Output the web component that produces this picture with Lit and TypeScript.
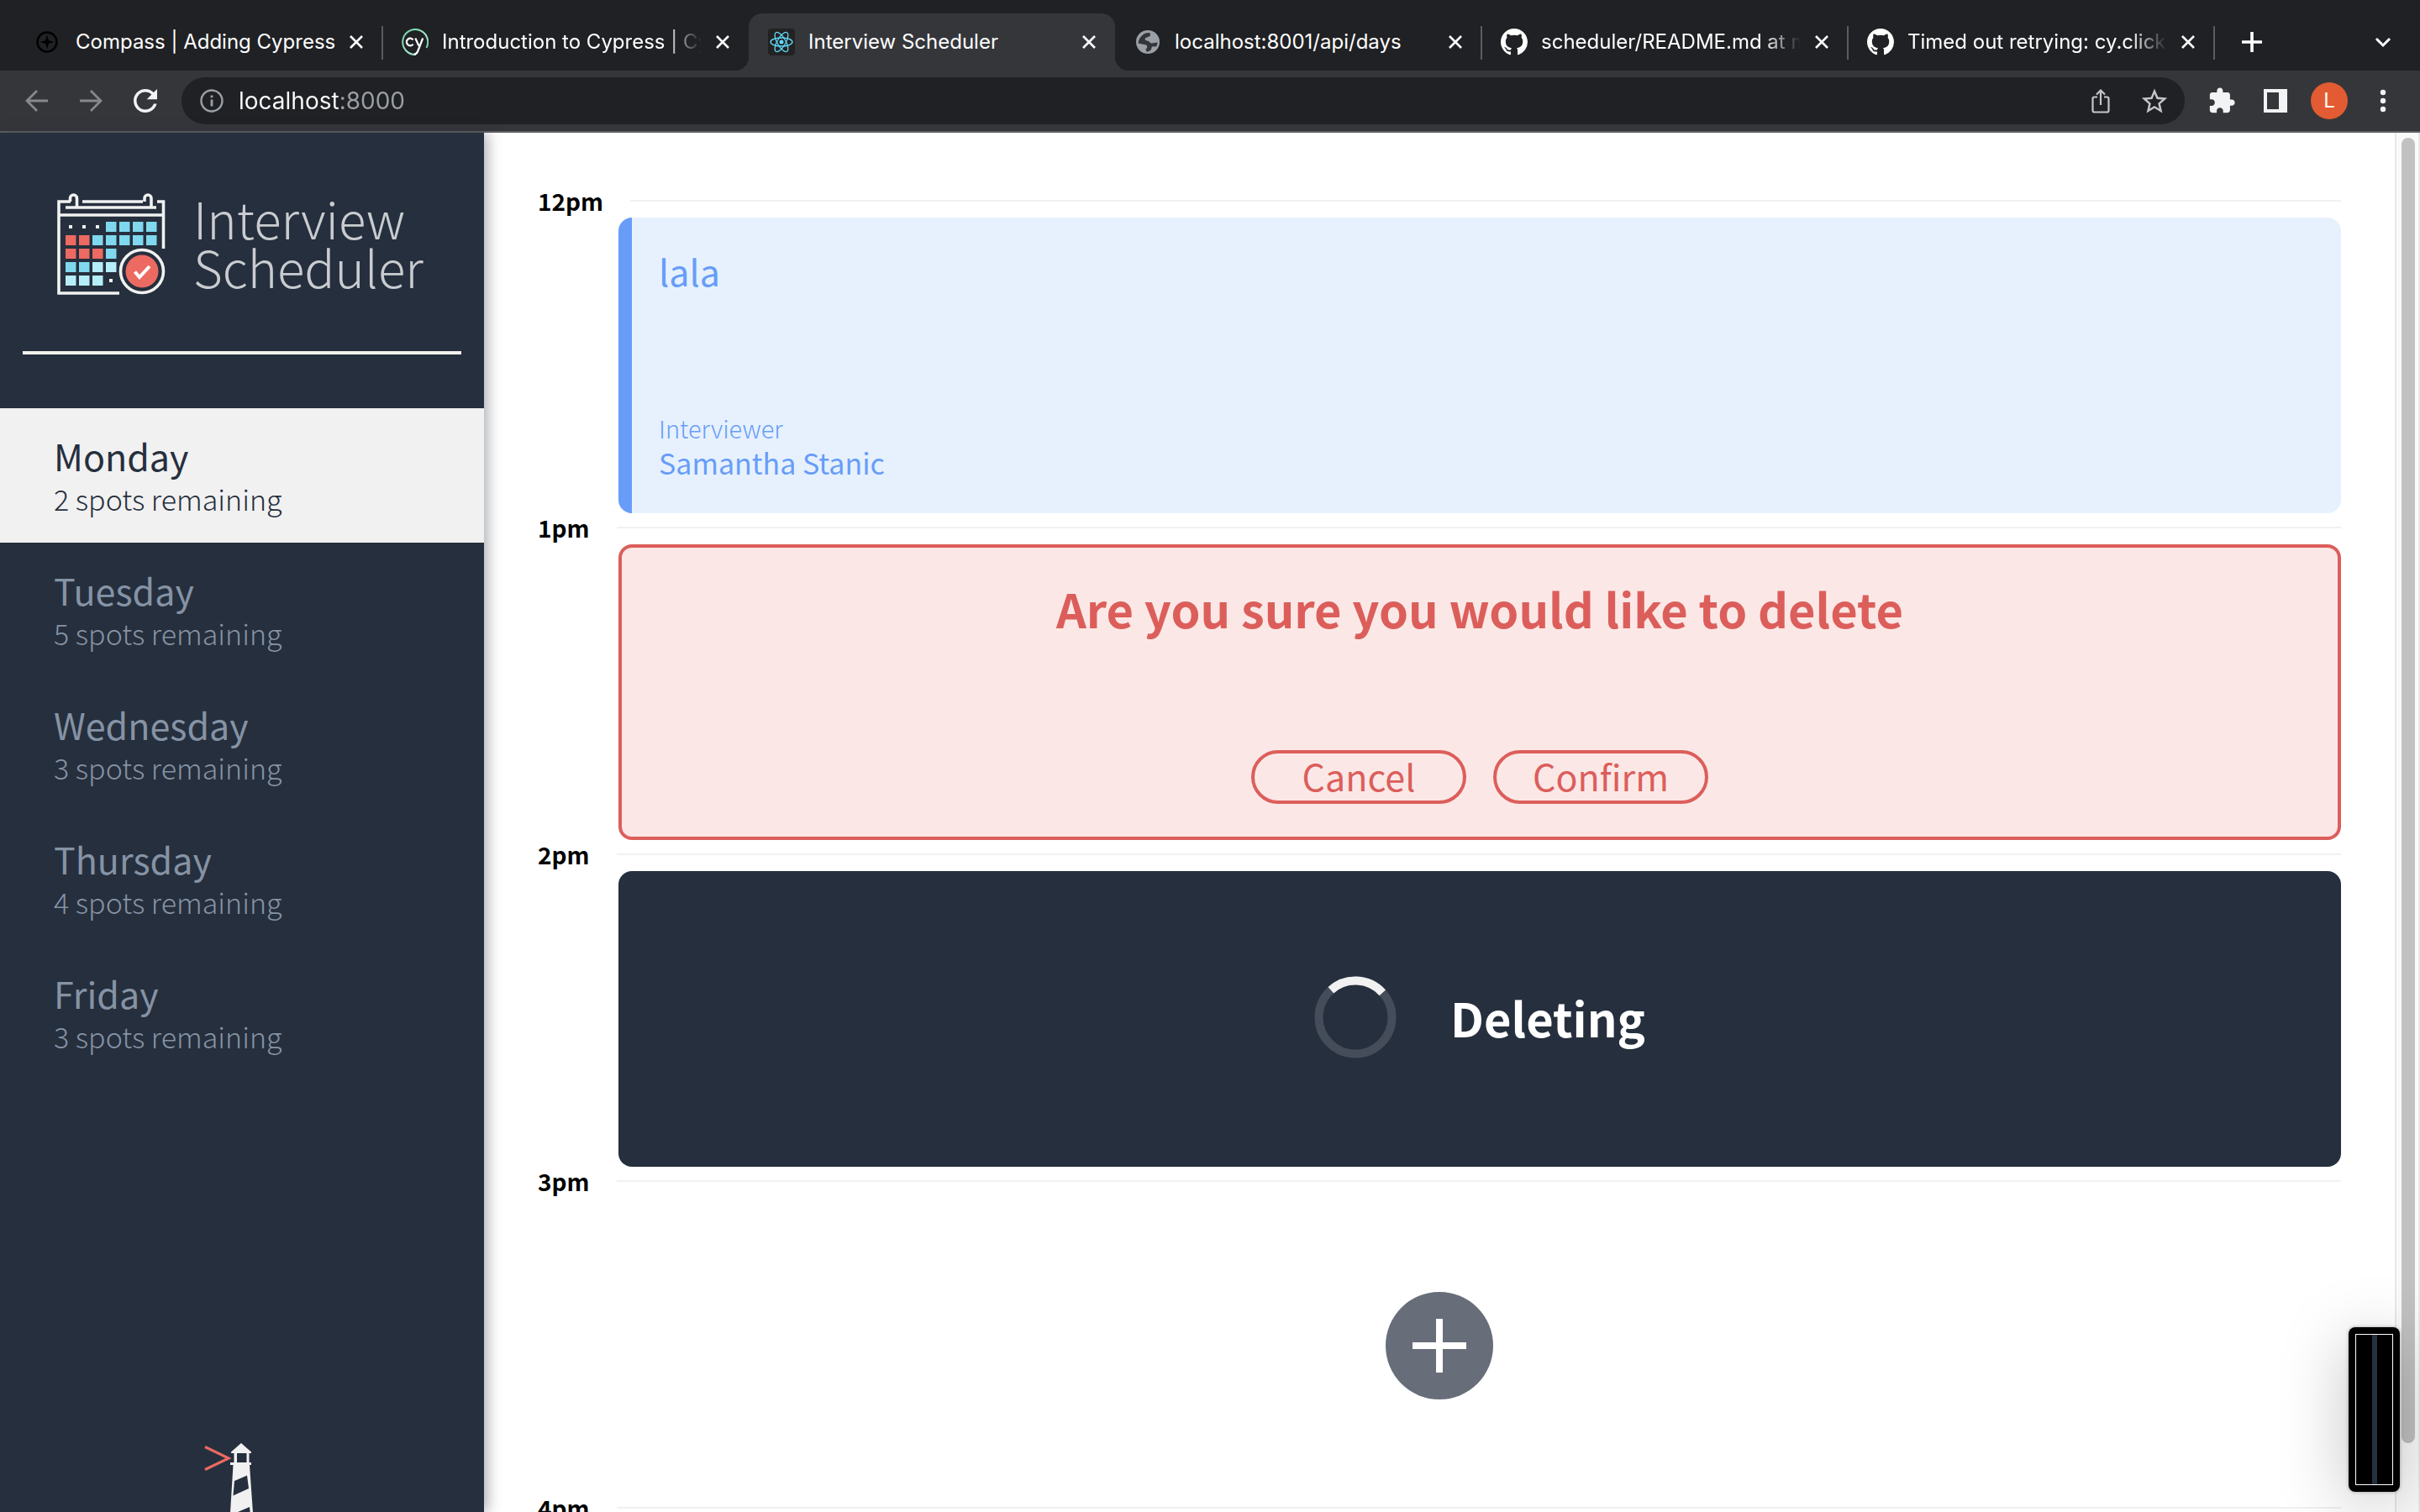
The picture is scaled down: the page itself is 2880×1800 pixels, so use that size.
import { LitElement, html, css, svg, nothing } from "lit";
import { customElement, property } from "lit/decorators.js";
import { classMap } from "lit/directives/class-map.js";

type IconName = "compass" | "cypress" | "react" | "globe" | "github";

interface Tab {
  title: string;
  icon: IconName;
  active?: boolean;
  fade?: boolean;
  divider?: boolean;
}

const TABS: Tab[] = [
  { title: "Compass | Adding Cypress", icon: "compass", divider: true },
  { title: "Introduction to Cypress | Cypress", icon: "cypress", fade: true },
  { title: "Interview Scheduler", icon: "react", active: true },
  { title: "localhost:8001/api/days", icon: "globe", divider: true },
  { title: "scheduler/README.md at master", icon: "github", fade: true, divider: true },
  { title: "Timed out retrying: cy.click()", icon: "github", fade: true, divider: true },
];

const DAYS = [
  { name: "Monday", spots: 2 },
  { name: "Tuesday", spots: 5 },
  { name: "Wednesday", spots: 3 },
  { name: "Thursday", spots: 4 },
  { name: "Friday", spots: 3 },
];

const FAVICONS: Record<IconName, unknown> = {
  compass: svg`
    <circle cx="14" cy="16" r="11.5" fill="none" stroke="#000" stroke-width="2.4"/>
    <path d="M14 7.500 15.800 14.200 22.500 16 15.800 17.800 14 24.500 12.200 17.800 5.500 16 12.200 14.200Z" fill="#000"/>`,
  cypress: svg`
    <defs>
      <linearGradient id="cy" x1="0" y1="0" x2="1" y2="1">
        <stop offset="0" stop-color="#69d3a7"/><stop offset="0.6" stop-color="#a3e7cb"/><stop offset="1" stop-color="#5fbf9a"/>
      </linearGradient>
    </defs>
    <path d="M17 31A15 15 0 1 1 29.500 23" fill="none" stroke="url(#cy)" stroke-width="2"/>
    <path d="M13.600 13.400A4.300 4.300 0 1 0 13.600 18.600" fill="none" stroke="#fff" stroke-width="2.200"/>
    <path d="M16.300 11.500 20.400 20.500M25.200 11.500 19 27.500Q17.800 30.500 14.500 30.800" fill="none" stroke="#fff" stroke-width="2.200"/>`,
  react: svg`
    <rect width="32" height="32" rx="4" fill="#222"/>
    <g fill="none" stroke="#61dafb" stroke-width="1.300">
      <ellipse cx="16" cy="16" rx="13" ry="5"/>
      <ellipse cx="16" cy="16" rx="13" ry="5" transform="rotate(60 16 16)"/>
      <ellipse cx="16" cy="16" rx="13" ry="5" transform="rotate(120 16 16)"/>
    </g>
    <circle cx="16" cy="16" r="2.500" fill="#61dafb"/>`,
  globe: svg`
    <circle cx="16" cy="16" r="14" fill="#9aa0a6"/>
    <path d="M9 8.500C11.500 5.500 15 4.500 18.500 5L19 8.500C17 10.500 13.500 10 12.500 12.500C13 15 17 14 18.500 16.500C20 18.500 23.500 16.500 27.500 16.500C27.500 18.500 27 20 26 21.500C23.500 21.500 21.500 20.500 20.500 22.500C20.500 25 18.500 27.500 14.500 27.500L13.500 24.500C16 23 15.500 21 14 19.500C11 18.500 7.500 18.500 4.500 17.500C5 13.500 6.500 10.500 9 8.500Z" fill="#35363a"/>`,
  github: svg`
    <path transform="scale(2)" fill="#fff" d="M8 0C3.580 0 0 3.580 0 8c0 3.540 2.290 6.530 5.470 7.590.4.070.55-.17.55-.38 0-.19-.01-.82-.01-1.490-2.010.37-2.530-.49-2.690-.94-.09-.23-.48-.94-.82-1.130-.28-.15-.68-.52-.01-.53.63-.01 1.080.58 1.230.82.72 1.210 1.870.87 2.330.66.07-.52.28-.87.51-1.070-1.780-.2-3.640-.89-3.640-3.950 0-.87.31-1.590.82-2.150-.08-.2-.36-1.020.08-2.120 0 0 .67-.21 2.200.82.64-.18 1.320-.27 2-.27.68 0 1.360.09 2 .27 1.530-1.040 2.200-.82 2.200-.82.44 1.100.16 1.920.08 2.120.51.56.82 1.270.82 2.150 0 3.070-1.870 3.750-3.650 3.950.29.25.54.73.54 1.480 0 1.070-.01 1.930-.01 2.200 0 .21.15.46.55.38A8.013 8.013 0 0016 8c0-4.420-3.580-8-8-8z"/>`,
};

const resetButton = css`
  button {
    appearance: none;
    border: 0;
    margin: 0;
    padding: 0;
    background: none;
    color: inherit;
    font: inherit;
    text-align: inherit;
    cursor: pointer;
  }
  svg {
    display: block;
    flex: none;
  }
`;

@customElement("browser-tab")
export class BrowserTab extends LitElement {
  @property({ attribute: false }) tab!: Tab;

  static styles = [
    resetButton,
    css`
      :host {
        display: block;
        flex: 0 1 436px;
        min-width: 0;
      }
      .tab {
        position: relative;
        display: flex;
        align-items: center;
        height: 68px;
        padding: 0 22px 0 23px;
        border-radius: 16px 16px 0 0;
        color: #fff;
      }
      .active {
        background: #35363a;
      }
      .active::before,
      .active::after {
        content: "";
        position: absolute;
        bottom: 0;
        width: 16px;
        height: 16px;
      }
      .active::before {
        right: 100%;
        background: radial-gradient(circle at 0 0, transparent 16px, #35363a 16px);
      }
      .active::after {
        left: 100%;
        background: radial-gradient(circle at 100% 0, transparent 16px, #35363a 16px);
      }
      .divider::after {
        content: "";
        position: absolute;
        right: -1px;
        top: 15px;
        width: 2px;
        height: 40px;
        background: #5a5c60;
      }
      .open {
        display: flex;
        align-items: center;
        gap: 16px;
        flex: 1;
        min-width: 0;
      }
      .title {
        flex: 1;
        min-width: 0;
        overflow: hidden;
        white-space: nowrap;
        line-height: 32px;
      }
      .fade {
        -webkit-mask-image: linear-gradient(to left, transparent, #000 44px);
        mask-image: linear-gradient(to left, transparent, #000 44px);
      }
      .close {
        margin-left: 16px;
      }
    `,
  ];

  render() {
    const { title, icon, active, fade, divider } = this.tab;
    return html`
      <div class=${classMap({ tab: true, active: !!active, divider: !!divider })}>
        <button class="open" role="tab" aria-selected=${active ? "true" : "false"}>
          <svg width="32" height="32" viewBox="0 0 32 32" aria-hidden="true">${FAVICONS[icon]}</svg>
          <span class=${classMap({ title: true, fade: !!fade })}>${title}</span>
        </button>
        <button class="close" aria-label="Close tab">
          <svg width="18" height="18" viewBox="0 0 18 18" aria-hidden="true">
            <path d="M2 2 16 16M16 2 2 16" stroke="#fff" stroke-width="2.600"/>
          </svg>
        </button>
      </div>
    `;
  }
}

@customElement("browser-bar")
export class BrowserBar extends LitElement {
  static styles = [
    resetButton,
    css`
      :host {
        display: block;
        font-family: Inter, Roboto, sans-serif;
        font-size: 24px;
        background: #202124;
      }
      .tabs {
        display: flex;
        align-items: center;
        padding: 16px 32px 0 19px;
      }
      .new-tab {
        margin-left: 32px;
      }
      .tab-search {
        margin-left: auto;
      }
      .toolbar {
        display: flex;
        align-items: center;
        height: 72px;
        padding: 0 22px 0 24px;
        background: #35363a;
        border-bottom: 2px solid #5f6063;
      }
      .nav {
        display: flex;
        align-items: center;
        gap: 24px;
        margin-right: 22px;
      }
      .address {
        display: flex;
        align-items: center;
        flex: 1;
        min-width: 0;
        height: 56px;
        padding: 0 20px;
        border-radius: 28px;
        background: #202124;
      }
      .url {
        flex: 1;
        min-width: 0;
        height: 40px;
        margin: 0 0 0 16px;
        padding: 0;
        border: 0;
        outline: 0;
        font: inherit;
        font-size: 28px;
        color: transparent;
        background: linear-gradient(to right, #fff 120px, #9aa0a6 120px);
        -webkit-background-clip: text;
        background-clip: text;
      }
      .page-actions {
        display: flex;
        gap: 32px;
      }
      .extras {
        display: flex;
        align-items: center;
        gap: 20px;
        margin-left: 22px;
      }
      .extra {
        display: flex;
        align-items: center;
        justify-content: center;
        width: 44px;
        height: 44px;
        border-radius: 50%;
        line-height: 44px;
      }
      .avatar {
        background: #e25b32;
        color: #fff;
      }
    `,
  ];

  render() {
    return html`
      <div class="tabs" role="tablist">
        ${TABS.map((tab) => html`<browser-tab .tab=${tab}></browser-tab>`)}
        <button class="new-tab" aria-label="New tab">
          <svg width="26" height="26" viewBox="0 0 26 26"><path d="M13 1V25M1 13H25" stroke="#fff" stroke-width="3.600"/></svg>
        </button>
        <button class="tab-search" aria-label="Search tabs">
          <svg width="24" height="24" viewBox="0 0 24 24"><path d="M4 8 12 16 20 8" fill="none" stroke="#fff" stroke-width="3"/></svg>
        </button>
      </div>
      <div class="toolbar">
        <div class="nav">
          <button aria-label="Back">
            <svg width="40" height="40" viewBox="0 0 40 40"><path d="M33 20H9M20 8 8 20 20 32" fill="none" stroke="#87888b" stroke-width="2.800"/></svg>
          </button>
          <button aria-label="Forward">
            <svg width="40" height="40" viewBox="0 0 40 40"><path d="M7 20H31M20 8 32 20 20 32" fill="none" stroke="#87888b" stroke-width="2.800"/></svg>
          </button>
          <button aria-label="Reload">
            <svg width="42" height="42" viewBox="0 0 24 24"><path fill="#f1f3f4" d="M17.650 6.350C16.200 4.900 14.210 4 12 4c-4.420 0-7.990 3.580-7.990 8s3.570 8 7.990 8c3.730 0 6.840-2.550 7.730-6h-2.080c-.82 2.330-3.040 4-5.650 4-3.310 0-6-2.690-6-6s2.690-6 6-6c1.660 0 3.140.69 4.220 1.780L13 11h7V4l-2.350 2.350z"/></svg>
          </button>
        </div>
        <div class="address">
          <svg width="32" height="32" viewBox="0 0 32 32" aria-hidden="true">
            <circle cx="16" cy="16" r="12.500" fill="none" stroke="#9aa0a6" stroke-width="2.400"/>
            <path d="M16 14.500V22.500M16 9.500V12.300" stroke="#9aa0a6" stroke-width="2.800"/>
          </svg>
          <input class="url" type="text" aria-label="Address" .value=${"localhost:8000"} />
          <div class="page-actions">
            <button aria-label="Share">
              <svg width="32" height="32" viewBox="0 0 32 32">
                <path d="M12 11.500H8.500Q6.500 11.500 6.500 13.500V27.500Q6.500 29.500 8.500 29.500H23.500Q25.500 29.500 25.500 27.500V13.500Q25.500 11.500 23.500 11.500H20M16 21V4M11 8.500 16 3.500 21 8.500" fill="none" stroke="#c4c7ca" stroke-width="2.200"/>
              </svg>
            </button>
            <button aria-label="Bookmark">
              <svg width="32" height="32" viewBox="1.500 1 21 21"><path fill="#c4c7ca" d="M22 9.240l-7.190-.62L12 2 9.190 8.630 2 9.240l5.460 4.730L5.820 21 12 17.270 18.180 21l-1.630-7.030L22 9.240zM12 15.400l-3.760 2.270 1-4.280-3.320-2.880 4.380-.38L12 6.100l1.710 4.040 4.380.38-3.320 2.880 1 4.280L12 15.400z"/></svg>
            </button>
          </div>
        </div>
        <div class="extras">
          <button class="extra" aria-label="Extensions">
            <svg width="34" height="34" viewBox="0 0 24 24"><path fill="#f1f3f4" d="M20.500 11H19V7c0-1.100-.9-2-2-2h-4V3.500C13 2.120 11.880 1 10.500 1S8 2.120 8 3.500V5H4c-1.100 0-1.990.9-1.990 2v3.800H3.500c1.490 0 2.700 1.210 2.700 2.700s-1.210 2.700-2.700 2.700H2V20c0 1.100.9 2 2 2h3.800v-1.500c0-1.490 1.210-2.700 2.700-2.700 1.490 0 2.700 1.210 2.700 2.700V22H17c1.100 0 2-.9 2-2v-4h1.500c1.380 0 2.500-1.120 2.500-2.500S21.880 11 20.500 11z"/></svg>
          </button>
          <button class="extra" aria-label="Side panel">
            <svg width="32" height="32" viewBox="0 0 32 32"><path fill="#f1f3f4" fill-rule="evenodd" d="M2 2H30V30H2ZM6 6V26H20V6Z"/></svg>
          </button>
          <button class="extra avatar" aria-label="Profile">L</button>
          <button class="extra" aria-label="Menu">
            <svg width="28" height="32" viewBox="0 0 28 32" fill="#f1f3f4"><circle cx="14" cy="6" r="3.200"/><circle cx="14" cy="16" r="3.200"/><circle cx="14" cy="26" r="3.200"/></svg>
          </button>
        </div>
      </div>
    `;
  }
}

const BLUE = "#7fd8ee";
const PALE = "#b5eef8";
const RED = "#ec6a62";
const CELLS = [
  [null, null, null, BLUE, BLUE, BLUE, BLUE],
  [RED, RED, BLUE, BLUE, BLUE, BLUE, BLUE],
  [RED, RED, RED, BLUE],
  [BLUE, BLUE, PALE, PALE],
  [PALE, PALE, PALE, null],
];

@customElement("day-sidebar")
export class DaySidebar extends LitElement {
  static styles = [
    resetButton,
    css`
      :host {
        display: flex;
        flex-direction: column;
        flex: 0 0 576px;
        z-index: 1;
        background: #262f3d;
        box-shadow: 4px 0 16px rgba(38, 47, 61, 0.4);
      }
      .brand {
        display: flex;
        gap: 30px;
        padding: 72px 0 0 64px;
      }
      .name {
        margin: 0;
        font-size: 60px;
        line-height: 58px;
        font-weight: 300;
        color: #c9ccd0;
      }
      .rule {
        height: 4px;
        margin: 64px 27px;
        border: 0;
        background: #f2f2ee;
      }
      .day {
        display: flex;
        flex-direction: column;
        gap: 8px;
        width: 100%;
        min-height: 160px;
        padding: 32px 64px 0;
        color: #8593a5;
      }
      .selected {
        background: #f1f1f1;
        color: #262f3d;
      }
      .day-name {
        font-size: 43px;
        line-height: 48px;
      }
      .spots {
        font-size: 34px;
        line-height: 40px;
        font-weight: 300;
      }
      .lighthouse {
        margin: auto auto 0;
      }
    `,
  ];

  render() {
    return html`
      <header class="brand">
        <svg width="136" height="124" viewBox="64 230 136 124" aria-hidden="true">
          <g fill="none" stroke="#f1f1f1" stroke-width="3.600">
            <path d="M142 349H70V240H84M98 240H170M187 240H194.500V296M78 247H186M71 256H194"/>
            <path d="M91.500 248V236A4 4 0 0 0 83.500 236V240"/>
            <path d="M180 248V236A4 4 0 0 0 172 236V240"/>
          </g>
          ${CELLS.map((row, r) =>
            row.map((fill, c) =>
              fill
                ? svg`<rect x=${78 + c * 16} y=${264 + r * 16} width="12.500" height="12" fill=${fill}/>`
                : svg`<rect x=${82 + c * 16} y=${268 + r * 16} width="4" height="4" fill="#f1f1f1"/>`,
            ),
          )}
          <circle cx="169" cy="323" r="25.500" fill="#262f3d" stroke="#f1f1f1" stroke-width="3.600"/>
          <circle cx="169" cy="323" r="19.500" fill=${RED}/>
          <path d="M160.500 323.500 166 330 178 317" fill="none" stroke="#fff" stroke-width="4"/>
        </svg>
        <h1 class="name">Interview<br />Scheduler</h1>
      </header>
      <hr class="rule" />
      <nav>
        ${DAYS.map(
          (day, i) => html`
            <button class=${classMap({ day: true, selected: i === 0 })}>
              <span class="day-name">${day.name}</span>
              <span class="spots">${day.spots} spots remaining</span>
            </button>
          `,
        )}
      </nav>
      <svg class="lighthouse" width="96" height="82" viewBox="240 1718 96 82" aria-hidden="true">
        <path d="M244 1722.500 272 1736 244 1749.500" fill="none" stroke="#ea6a63" stroke-width="3.200"/>
        <path fill="#f1f1f1" fill-rule="evenodd" d="M287 1718 299 1728.500V1730H296.500V1741H299V1744H297L301 1801H274L277.500 1744H274V1741H278.500V1730H275V1728.500ZM282 1730V1741H293.500V1730ZM279 1763 277.500 1780.500 296 1772 294 1756.500ZM276 1803H298L297 1794Z"/>
      </svg>
    `;
  }
}

type SlotKind = "show" | "confirm" | "status" | "empty" | "header";

@customElement("hour-slot")
export class HourSlot extends LitElement {
  @property() time = "";
  @property() kind: SlotKind = "empty";

  static styles = [
    resetButton,
    css`
      :host {
        display: block;
      }
      .hour {
        display: flex;
        align-items: center;
        gap: 32px;
        margin-bottom: 3px;
      }
      .time {
        margin: 0;
        font-size: 28px;
        line-height: 34px;
        font-weight: 700;
        color: #000;
      }
      .line {
        flex: 1;
        height: 2px;
        margin: 0;
        border: 0;
        background: #f1f1f1;
      }
      .card {
        display: flex;
        box-sizing: border-box;
        min-height: 352px;
        margin-left: 96px;
        border-radius: 16px;
      }
      .show {
        flex-direction: column;
        justify-content: space-between;
        padding: 39px 32px 40px;
        border-left: 16px solid #679df8;
        background: #e7f1fe;
        color: #679df8;
      }
      .student {
        margin: 0;
        font-size: 43px;
        line-height: 48px;
        font-weight: 400;
      }
      .person {
        display: flex;
        flex-direction: column;
        gap: 2px;
      }
      .label,
      .interviewer {
        margin: 0;
        line-height: 40px;
      }
      .label {
        font-size: 29px;
        font-weight: 300;
      }
      .interviewer {
        font-size: 34px;
        font-weight: 400;
      }
      .confirm {
        flex-direction: column;
        align-items: center;
        justify-content: space-between;
        padding: 40px 40px 39px;
        border: 4px solid #dc5e5b;
        background: #fbe8e6;
        color: #dc5e5b;
      }
      .message {
        margin: 0;
        font-size: 56px;
        line-height: 64px;
        font-weight: 700;
      }
      .actions {
        display: flex;
        gap: 32px;
      }
      .actions .action {
        box-sizing: border-box;
        width: 256px;
        height: 64px;
        padding-bottom: 4px;
        border: 4px solid #dc5e5b;
        border-radius: 32px;
        font-size: 43px;
        line-height: 52px;
        text-align: center;
      }
      .status {
        align-items: center;
        justify-content: center;
        gap: 64px;
        padding-bottom: 4px;
        background: #262f3d;
        color: #fff;
      }
      .empty {
        margin-left: 0;
        align-items: center;
        justify-content: center;
      }
    `,
  ];

  private body() {
    switch (this.kind) {
      case "show":
        return html`
          <article class="card show">
            <h2 class="student">lala</h2>
            <div class="person">
              <p class="label">Interviewer</p>
              <p class="interviewer">Samantha Stanic</p>
            </div>
          </article>
        `;
      case "confirm":
        return html`
          <article class="card confirm">
            <h2 class="message">Are you sure you would like to delete</h2>
            <div class="actions">
              <button class="action">Cancel</button>
              <button class="action">Confirm</button>
            </div>
          </article>
        `;
      case "status":
        return html`
          <article class="card status">
            <svg width="98" height="98" viewBox="-49 -49 98 98" aria-hidden="true">
              <circle r="43.500" fill="none" stroke="#454d5a" stroke-width="10"/>
              <path d="M-29.100 -32.300A43.500 43.500 0 0 1 32.300 -29.100" fill="none" stroke="#f1f1f1" stroke-width="10"/>
            </svg>
            <h2 class="message">Deleting</h2>
          </article>
        `;
      case "empty":
        return html`
          <article class="card empty">
            <button aria-label="Add">
              <svg width="128" height="128" viewBox="0 0 128 128">
                <circle cx="64" cy="64" r="64" fill="#676e79"/>
                <path d="M64 32V96M32 64H96" stroke="#fff" stroke-width="8"/>
              </svg>
            </button>
          </article>
        `;
      default:
        return nothing;
    }
  }

  render() {
    return html`
      <header class="hour">
        <h4 class="time">${this.time}</h4>
        <hr class="line" />
      </header>
      ${this.body()}
    `;
  }
}

@customElement("app-root")
export class AppRoot extends LitElement {
  static styles = css`
    :host {
      display: flex;
      flex-direction: column;
      position: relative;
      height: 100vh;
      overflow: hidden;
      background: #fff;
      font-family: "Noto Sans CJK JP", "Noto Sans", sans-serif;
    }
    .page {
      display: flex;
      flex: 1;
      min-height: 0;
    }
    .schedule {
      flex: 1;
      min-width: 0;
      padding: 64px 64px 0;
      overflow: hidden;
    }
    .track {
      box-sizing: border-box;
      flex: 0 0 30px;
      padding: 6px 4px 0 6px;
      border: solid #e8e8e8;
      border-width: 0 2px;
      background: #fafafa;
    }
    .thumb {
      height: 95%;
      border-radius: 8px;
      background: #c1c1c1;
    }
    .preview {
      position: absolute;
      z-index: 2;
      right: 24px;
      bottom: 24px;
      box-sizing: border-box;
      width: 61px;
      height: 196px;
      padding: 8px;
      border-radius: 8px;
      background: #000;
      box-shadow: 0 16px 80px rgba(0, 0, 0, 0.25), 0 0 4px rgba(0, 0, 0, 0.3);
    }
    .preview-inner {
      box-sizing: border-box;
      height: 100%;
      border: 1px solid #fff;
      background: linear-gradient(#253040, #253040) center / 6px 100% no-repeat #000;
    }
  `;

  render() {
    return html`
      <browser-bar></browser-bar>
      <div class="page">
        <day-sidebar></day-sidebar>
        <main class="schedule">
          <hour-slot time="12pm" kind="show"></hour-slot>
          <hour-slot time="1pm" kind="confirm"></hour-slot>
          <hour-slot time="2pm" kind="status"></hour-slot>
          <hour-slot time="3pm" kind="empty"></hour-slot>
          <hour-slot time="4pm" kind="header"></hour-slot>
        </main>
        <div class="track"><div class="thumb"></div></div>
      </div>
      <div class="preview"><div class="preview-inner"></div></div>
    `;
  }
}
